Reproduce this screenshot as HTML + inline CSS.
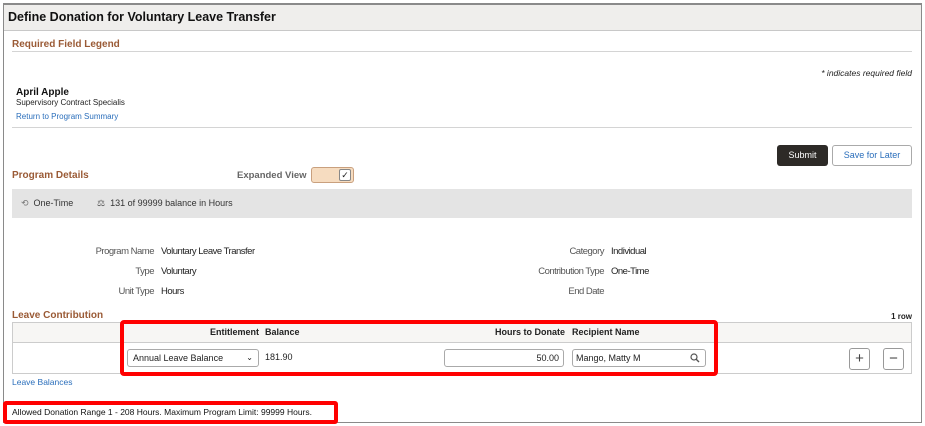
<!DOCTYPE html>
<html><head><style>
*{margin:0;padding:0;box-sizing:border-box}
body{width:925px;height:426px;background:#fff;font-family:"Liberation Sans",sans-serif;position:relative;overflow:hidden;color:#222}
.a{position:absolute;white-space:nowrap}
.frame{left:3px;top:3px;width:919px;height:420px;border:1px solid #8a8a8a;border-top:2px solid #8a8a8a}
.hdr{left:4px;top:5px;width:917px;height:26px;background:#efeeec;border-bottom:1px solid #c8c8c8}
.brown{color:#9a5a35;font-weight:bold;font-size:10px}
.line{height:1px;background:#d4d4d4}
.lbl{font-size:9.5px;color:#555;letter-spacing:-0.5px}
.val{font-size:9.5px;color:#222;letter-spacing:-0.5px}
.inp{border:1px solid #aaa;border-radius:3px;background:#fff;font-size:9px}
</style></head><body>
<div class="a frame"></div>
<div class="a hdr"></div>
<div class="a" style="left:8px;top:10px;font-size:12.5px;font-weight:bold;color:#111">Define Donation for Voluntary Leave Transfer</div>
<div class="a brown" style="left:12px;top:39px">Required Field Legend</div>
<div class="a line" style="left:12px;top:51px;width:900px"></div>
<div class="a" style="right:13px;top:68px;font-size:8.5px;font-style:italic">* indicates required field</div>
<div class="a" style="left:16px;top:87px;font-size:10px;font-weight:bold;color:#111">April Apple</div>
<div class="a" style="left:16px;top:98px;font-size:8px">Supervisory Contract Specialis</div>
<div class="a" style="left:16px;top:112px;font-size:8px;color:#2a6ebb">Return to Program Summary</div>
<div class="a line" style="left:12px;top:127px;width:900px"></div>
<div class="a" style="left:777px;top:145px;width:51px;height:21px;background:#2d2a27;border-radius:3px;color:#fff;font-size:9px;text-align:center;line-height:21px">Submit</div>
<div class="a" style="left:832px;top:145px;width:80px;height:21px;border:1px solid #aaa;border-radius:3px;color:#2a6ebb;font-size:9px;text-align:center;line-height:19px">Save for Later</div>
<div class="a brown" style="left:12px;top:170px">Program Details</div>
<div class="a" style="left:237px;top:170px;font-size:9.5px;font-weight:bold;color:#666">Expanded View</div>
<div class="a" style="left:311px;top:167px;width:43px;height:16px;background:#f6dcc0;border:1px solid #c9a07e;border-radius:3px"></div>
<div class="a" style="left:339px;top:169px;width:12px;height:12px;background:#fff;border:1px solid #888;border-radius:2px;font-size:9px;line-height:10px;text-align:center">✓</div>
<div class="a" style="left:12px;top:189px;width:900px;height:29px;background:#e4e4e4"></div>
<div class="a" style="left:21px;top:198px;font-size:9px;color:#333"><span style="color:#777">⟲</span>&nbsp; One-Time</div>
<div class="a" style="left:97px;top:198px;font-size:9px;color:#333"><span style="color:#555">⚖</span>&nbsp; 131 of 99999 balance in Hours</div>
<div class="a lbl" style="right:771px;top:246px">Program Name</div><div class="a val" style="left:161px;top:246px">Voluntary Leave Transfer</div>
<div class="a lbl" style="right:771px;top:266px">Type</div><div class="a val" style="left:161px;top:266px">Voluntary</div>
<div class="a lbl" style="right:771px;top:286px">Unit Type</div><div class="a val" style="left:161px;top:286px">Hours</div>
<div class="a lbl" style="right:321px;top:246px">Category</div><div class="a val" style="left:611px;top:246px">Individual</div>
<div class="a lbl" style="right:321px;top:266px">Contribution Type</div><div class="a val" style="left:611px;top:266px">One-Time</div>
<div class="a lbl" style="right:321px;top:286px">End Date</div>
<div class="a brown" style="left:12px;top:310px">Leave Contribution</div>
<div class="a" style="right:13px;top:312px;font-size:8px;font-weight:bold">1 row</div>
<div class="a" style="left:12px;top:322px;width:900px;height:52px;border:1px solid #ccc"></div>
<div class="a" style="left:13px;top:323px;width:898px;height:20px;background:#f7f6f4;border-bottom:1px solid #ccc"></div>
<div class="a" style="left:120px;top:320px;width:598px;height:56px;border:4px solid #f00;border-radius:4px"></div>
<div class="a" style="right:666px;top:327px;font-size:9px;font-weight:bold">Entitlement</div>
<div class="a" style="left:265px;top:327px;font-size:9px;font-weight:bold">Balance</div>
<div class="a" style="right:360px;top:327px;font-size:9px;font-weight:bold">Hours to Donate</div>
<div class="a" style="left:572px;top:327px;font-size:9px;font-weight:bold">Recipient Name</div>
<div class="a inp" style="left:127px;top:349px;width:132px;height:18px;line-height:16px;padding-left:5px">Annual Leave Balance<span style="position:absolute;right:5px;font-size:8px">⌄</span></div>
<div class="a" style="left:265px;top:352px;font-size:9px">181.90</div>
<div class="a inp" style="left:444px;top:349px;width:120px;height:18px;line-height:16px;text-align:right;padding-right:4px">50.00</div>
<div class="a inp" style="left:572px;top:349px;width:134px;height:18px;line-height:16px;padding-left:3px">Mango, Matty M
<svg style="position:absolute;right:5px;top:3px" width="10" height="10" viewBox="0 0 10 10"><circle cx="4" cy="4" r="3" fill="none" stroke="#555" stroke-width="1.2"/><line x1="6.2" y1="6.2" x2="9" y2="9" stroke="#555" stroke-width="1.4"/></svg></div>
<div class="a" style="left:849px;top:348px;width:21px;height:22px;border:1px solid #999;border-radius:3px;text-align:center;line-height:19px;font-size:15px;color:#444">+</div>
<div class="a" style="left:883px;top:348px;width:21px;height:22px;border:1px solid #999;border-radius:3px;text-align:center;line-height:19px;font-size:15px;color:#444">−</div>
<div class="a" style="left:12px;top:377px;font-size:8.5px;color:#2a6ebb">Leave Balances</div>
<div class="a" style="left:3px;top:401px;width:335px;height:23px;border:4px solid #f00;border-radius:3px"></div>
<div class="a" style="left:12px;top:407px;font-size:8.5px;color:#111">Allowed Donation Range 1 - 208 Hours. Maximum Program Limit: 99999 Hours.</div>
</body></html>
